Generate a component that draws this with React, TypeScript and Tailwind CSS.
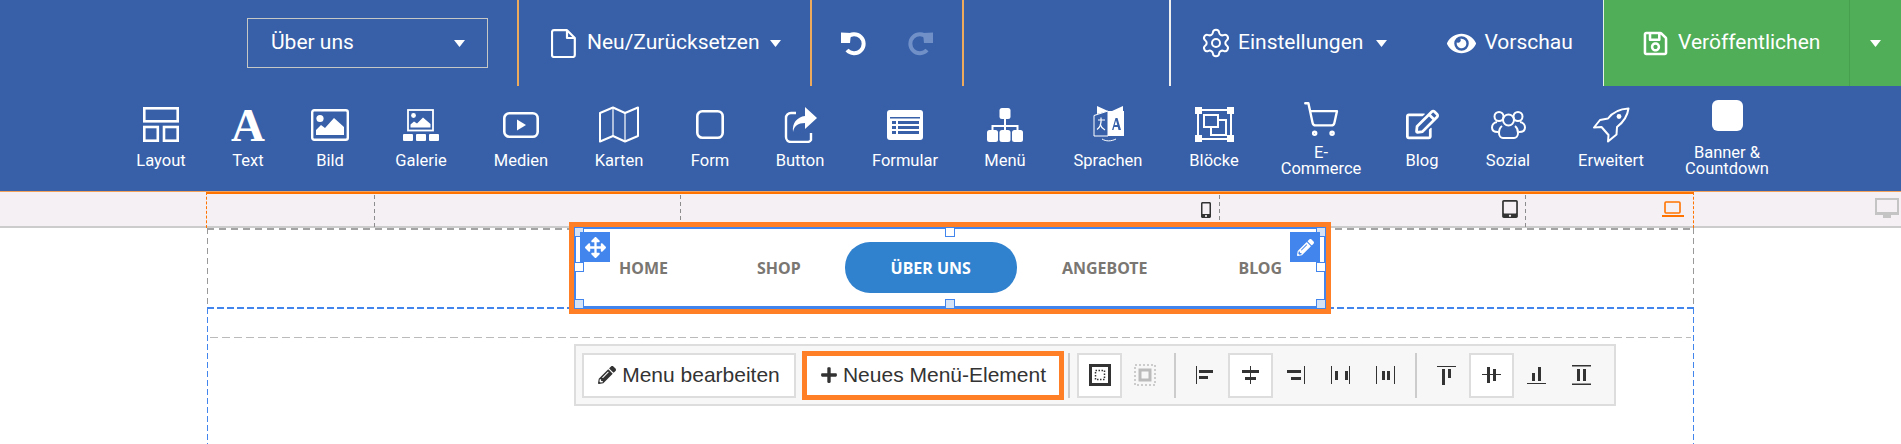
import { FaArrowsAlt, FaEye, FaPencilAlt, FaPlus, FaRegEdit, FaRegSave, FaMobileAlt, FaTabletAlt } from "react-icons/fa"
import { Settings, ShoppingCart } from "lucide-react"

const roboto = "font-['Roboto',sans-serif]"

const Caret = () => (
  <svg width="11" height="7" viewBox="0 0 11 7" className="shrink-0"><path d="M0 0h11L5.500 7z" fill="#fff" /></svg>
)

const FileIcon = () => (
  <svg width="25" height="29" viewBox="0 0 25 29" fill="none" stroke="#fff" strokeWidth="2.200" strokeLinejoin="round" className="shrink-0">
    <path d="M3 1.200h13l7.800 7.800v17a2 2 0 0 1-2 2H3a2 2 0 0 1-2-2V3a2 2 0 0 1 2-1.800z" />
    <path d="M16 1.200V9h7.800" />
  </svg>
)

const UndoIcon = ({ flip }: { flip?: boolean }) => (
  <svg width="26" height="25" viewBox="0 0 26 25" fill="none" className={flip ? "-scale-x-100 text-[#7190c8]" : "text-white"}>
    <path d="M6 6.500a9.500 9.500 0 1 1 0 12.500" stroke="currentColor" strokeWidth="4" />
    <path d="M0 1.500l10 .5-1 10H0z" fill="currentColor" />
  </svg>
)

const LayoutIcon = () => (
  <svg width="36" height="35" viewBox="0 0 36 35" fill="none" stroke="#fff" strokeWidth="2.600">
    <rect x="1.300" y="1.300" width="33.400" height="13" />
    <rect x="1.300" y="20" width="13.500" height="13.700" />
    <rect x="21" y="20" width="13.700" height="13.700" />
  </svg>
)

const BildIcon = () => (
  <svg width="38" height="32" viewBox="0 0 38 32">
    <rect x="1.200" y="1.200" width="35.600" height="29.600" rx="2" fill="none" stroke="#fff" strokeWidth="2.400" />
    <circle cx="9" cy="9.500" r="3.600" fill="#fff" />
    <path d="M5 26v-5l5-5 4 3 9-10 10 9v8z" fill="#fff" />
  </svg>
)

const GalerieIcon = () => (
  <svg width="36" height="32" viewBox="0 0 36 32">
    <rect x="5" y="1" width="25" height="20.500" fill="none" stroke="#fff" strokeWidth="1.800" />
    <circle cx="10.500" cy="6.500" r="2.400" fill="#fff" />
    <path d="M7.500 18.500v-3l3.500-3 3 2 6-6 7.500 6.500v3.500z" fill="#fff" />
    <rect x="0" y="25" width="10" height="7" rx="1" fill="#fff" />
    <rect x="13" y="25" width="10" height="7" rx="1" fill="#fff" />
    <rect x="26" y="25" width="10" height="7" rx="1" fill="#fff" />
  </svg>
)

const MedienIcon = () => (
  <svg width="36" height="26" viewBox="0 0 36 26">
    <rect x="1.300" y="1.300" width="33.400" height="23.400" rx="5" fill="none" stroke="#fff" strokeWidth="2.600" />
    <path d="M14 7.500l9 5.500-9 5.500z" fill="#fff" />
  </svg>
)

const KartenIcon = () => (
  <svg width="40" height="37" viewBox="0 0 40 37" fill="none" stroke="#fff" strokeWidth="2" strokeLinejoin="round">
    <path d="M1 7L14 1.500 26 7 39 1.500V30l-13 5.500L14 30 1 35.500z" />
    <path d="M14 2v28M26 7v28" strokeWidth="1.200" />
  </svg>
)

const FormIcon = () => (
  <svg width="28" height="29" viewBox="0 0 28 29"><rect x="1.300" y="1.300" width="25.400" height="26.400" rx="5" fill="none" stroke="#fff" strokeWidth="2.600" /></svg>
)

const ButtonIcon = () => (
  <svg width="33" height="36" viewBox="0 0 33 36" fill="none">
    <path d="M12 6H7a5 5 0 0 0-5 5v19a5 5 0 0 0 5 5h17a4 4 0 0 0 3-2v-7" stroke="#fff" strokeWidth="2.400" />
    <path d="M21 0l12 11-12 11v-6c-7 0-11 3-12 9-1-9 4-15 12-16z" fill="#fff" />
  </svg>
)

const FormularIcon = () => (
  <svg width="36" height="30" viewBox="0 0 36 30">
    <rect width="36" height="30" rx="3" fill="#fff" />
    <g fill="#3760a9">
      <rect x="3" y="7" width="30" height="1.500" />
      <rect x="5" y="11" width="4" height="3" /><rect x="11" y="11" width="21" height="3" />
      <rect x="5" y="16" width="4" height="3" /><rect x="11" y="16" width="21" height="3" />
      <rect x="5" y="21" width="4" height="3" /><rect x="11" y="21" width="21" height="3" />
    </g>
  </svg>
)

const MenuIcon = () => (
  <svg width="36" height="34" viewBox="0 0 36 34">
    <rect x="12.500" y="0" width="11" height="11" rx="2.500" fill="#fff" />
    <path d="M18 11v7M5.500 22v-4h25v4M18 18v4" stroke="#fff" strokeWidth="2" fill="none" />
    <rect x="0" y="22" width="11" height="12" rx="2.500" fill="#fff" />
    <rect x="12.500" y="22" width="11" height="12" rx="2.500" fill="#fff" />
    <rect x="25" y="22" width="11" height="12" rx="2.500" fill="#fff" />
  </svg>
)

const SprachenIcon = () => (
  <svg width="31" height="37" viewBox="0 0 31 37">
    <path d="M1 9.500L15 5v25L1 30z" fill="none" stroke="#fff" strokeWidth="1" />
    <path d="M15 5h16v25H15z" fill="#fff" />
    <path d="M4 0l11 5L4 8zM30 0L19 5l11 2z" fill="#fff" />
    <path d="M5 14h7M8 11.500c.5 5-1 10-4 12M7 18c1 3 3 5 5 6" stroke="#fff" strokeWidth="1.200" fill="none" />
    <path d="M19 24l3.500-12h2L28 24h-2.500l-.7-3h-3.600l-.7 3zM21.700 19h2.600l-1.300-4.500z" fill="#3760a9" fillRule="evenodd" />
    <path d="M9 33c4 2.500 9 2.500 14 0" stroke="#fff" strokeWidth="1" fill="none" />
  </svg>
)

const BloeckeIcon = () => (
  <svg width="39" height="35" viewBox="0 0 39 35" fill="none">
    <rect x="3" y="3" width="33" height="29" stroke="#fff" strokeWidth="2" />
    <g fill="#fff">
      <rect width="7" height="7" /><rect x="32" width="7" height="7" />
      <rect y="28" width="7" height="7" /><rect x="32" y="28" width="7" height="7" />
    </g>
    <rect x="9" y="8" width="14" height="12" stroke="#fff" strokeWidth="2" />
    <path d="M23 13h8v15H16v-8" stroke="#fff" strokeWidth="2" />
  </svg>
)

const SozialIcon = () => (
  <svg width="35" height="28" viewBox="0 0 35 28" fill="none" stroke="#fff" strokeWidth="2">
    <circle cx="8" cy="5.500" r="4.500" />
    <circle cx="27" cy="5.500" r="4.500" />
    <circle cx="17.500" cy="9" r="5.500" />
    <path d="M6 11c-3 .5-5 3-5 5.500S3 21 7 21M29 11c3 .5 5 3 5 5.500S32 21 28 21" />
    <path d="M11 15c-2 1.500-3 4-3 7 0 3 2 5 4 5h11c2 0 4-2 4-5 0-3-1-5.500-3-7" />
  </svg>
)

const RocketIcon = () => (
  <svg width="37" height="36" viewBox="0 0 37 36" fill="none" stroke="#fff" strokeWidth="2" strokeLinejoin="round">
    <path d="M35.500 1.500c-10 .5-16 4-20.500 10l-8 1.500L1 20.500l7.500-.5 7 8-.5 6.500 8.500-7 .5-7.500c6.500-5 10.500-11 11.500-18.500z" />
    <circle cx="26" cy="9.500" r="2.400" fill="#fff" stroke="none" />
  </svg>
)

const BannerIcon = () => <div className="w-[31px] h-[31px] rounded-[6px] bg-white" />

const Glyph = () => (
  <span className="font-['Liberation_Serif',serif] font-bold text-[47px] leading-[36px] text-white">A</span>
)

const tools = [
  { label: "Layout", w: "w-[86px]", icon: <LayoutIcon /> },
  { label: "Text", w: "w-[88px]", icon: <Glyph /> },
  { label: "Bild", w: "w-[76px]", icon: <BildIcon /> },
  { label: "Galerie", w: "w-[106px]", icon: <GalerieIcon /> },
  { label: "Medien", w: "w-[94px]", icon: <MedienIcon /> },
  { label: "Karten", w: "w-[102px]", icon: <KartenIcon /> },
  { label: "Form", w: "w-[80px]", icon: <FormIcon /> },
  { label: "Button", w: "w-[100px]", icon: <ButtonIcon /> },
  { label: "Formular", w: "w-[110px]", icon: <FormularIcon /> },
  { label: "Menü", w: "w-[90px]", icon: <MenuIcon /> },
  { label: "Sprachen", w: "w-[116px]", icon: <SprachenIcon /> },
  { label: "Blöcke", w: "w-[96px]", icon: <BloeckeIcon /> },
  { label: "E-Commerce", w: "w-[118px]", icon: <ShoppingCart size={38} strokeWidth={1.500} color="#fff" />, lines: ["E-", "Commerce"], up: true },
  { label: "Blog", w: "w-[84px]", icon: <FaRegEdit size={33} color="#fff" /> },
  { label: "Sozial", w: "w-[88px]", icon: <SozialIcon /> },
  { label: "Erweitert", w: "w-[118px]", icon: <RocketIcon /> },
  { label: "Banner", w: "w-[114px]", icon: <BannerIcon />, lines: ["Banner &", "Countdown"], up: true },
]

const navItems = [
  { label: "HOME", cls: "pl-[45px] pr-[45px]" },
  { label: "SHOP", cls: "pl-[44px] pr-[44px]" },
  { label: "ÜBER UNS", cls: "h-[51px] px-[46px] flex items-center bg-[#3182ce] text-white rounded-[25px]" },
  { label: "ANGEBOTE", cls: "pl-[45px] pr-[45px]" },
  { label: "BLOG", cls: "pl-[46px] pr-[40px]" },
]

const FrameIcon = ({ dim }: { dim?: boolean }) => dim ? (
  <svg width="22" height="22" viewBox="0 0 22 22" fill="none">
    <rect x="1" y="1" width="20" height="20" stroke="#ccc" strokeWidth="2" strokeDasharray="2 2" />
    <rect x="6" y="6" width="10" height="10" stroke="#bbb" strokeWidth="3" />
  </svg>
) : (
  <svg width="22" height="22" viewBox="0 0 22 22" fill="none">
    <rect x="1.500" y="1.500" width="19" height="19" stroke="#333" strokeWidth="3" />
    <rect x="6.500" y="6.500" width="9" height="9" stroke="#333" strokeWidth="1.500" strokeDasharray="1.500 1.500" />
  </svg>
)

const alignPaths = [
  "M1 2h1v18H1zM4 6h14v3H4zM4 12h9v3H4z",
  "M10 2h1v18h-1zM2 6h17v3H2zM5 13h11v3H5z",
  "M19 2h1v18h-1zM2 6h14v3H2zM6 13h10v3H6z",
  "M1 2h1v18H1zM19 2h1v18h-1zM5 7h3v9H5zM15 7h3v9h-3z",
  "M1 2h1v18H1zM19 2h1v18h-1zM7 7h3v9H7zM12 7h3v9h-3z",
  "M1 2h19v1H1zM6 5h3v16H6zM12 5h3v9h-3z",
  "M1 10h19v1H1zM6 3h3v16H6zM12 5h3v12h-3z",
  "M1 19h19v1H1zM6 9h3v8H6zM12 3h3v14h-3z",
  "M1 1h19v1.500H1zM1 19.500h19V21H1zM6 5h3v12H6zM12 5h3v12h-3z",
]

const AlignIcon = ({ d }: { d: string }) => (
  <svg width="21" height="22" viewBox="0 0 21 22" fill="#333"><path d={d} /></svg>
)

const IconBtn = ({ active, children }: { active?: boolean; children: React.ReactNode }) => (
  <div className={active ? "w-[45px] h-[45px] flex items-center justify-center shrink-0 bg-white border-2 border-[#ddd]" : "w-[45px] h-[45px] flex items-center justify-center shrink-0"}>
    {children}
  </div>
)

const Divider = () => <div className="w-[2px] h-[45px] bg-[#ccc] shrink-0" />

const Handle = ({ pos, fill }: { pos: string; fill?: boolean }) => (
  <div className={`absolute w-[10px] h-[10px] border border-[#4285ec] ${fill ? "bg-[#d5e3f9]" : "bg-white"} ${pos}`} />
)

const RulerMark = ({ left }: { left: string }) => (
  <div className={`absolute ${left} top-[3px] h-[33px] w-px bg-[repeating-linear-gradient(to_bottom,#8c8c8c_0_4px,transparent_4px_7px)]`} />
)

export default function App() {
  return (
    <div className={`w-[1901px] h-[444px] overflow-hidden bg-white flex flex-col ${roboto}`}>
      <header className="bg-[#3760a9] text-white shrink-0">
        <div className="flex h-[86px] text-[21px]">
          <div className="w-[519px] flex items-center pl-[247px] border-r-2 border-[#eda95c] shrink-0">
            <div className="w-[241px] h-[50px] border border-[#c5c8c5] flex items-center justify-between pl-[23px] pr-[22px]">
              <span>Über uns</span>
              <Caret />
            </div>
          </div>
          <div className="w-[293px] flex items-center pl-[32px] gap-[11px] border-r-2 border-[#eda95c] shrink-0">
            <FileIcon />
            <span>Neu/Zurücksetzen</span>
            <Caret />
          </div>
          <div className="w-[152px] flex items-center pl-[29px] gap-[40px] border-r-2 border-[#eda95c] shrink-0">
            <UndoIcon />
            <UndoIcon flip />
          </div>
          <div className="w-[207px] border-r-2 border-[#f0f0f0] shrink-0" />
          <div className="w-[432px] flex items-center pl-[29px] shrink-0">
            <Settings size={32} strokeWidth={1.500} />
            <span className="ml-[6px]">Einstellungen</span>
            <span className="ml-[13px]"><Caret /></span>
            <FaEye size={29} className="ml-[60px]" />
            <span className="ml-[8px]">Vorschau</span>
          </div>
          <div className="flex-1 bg-[#4fae57] flex border-l border-[#e4f3e5]">
            <div className="w-[246px] flex items-center pl-[38px] gap-[9px] border-r border-[#46a04e] shrink-0">
              <FaRegSave size={27} />
              <span>Veröffentlichen</span>
            </div>
            <div className="flex-1 flex items-center justify-center">
              <Caret />
            </div>
          </div>
        </div>
        <div className="flex h-[105px] pl-[118px]">
          {tools.map((t) => (
            <div key={t.label} className={`${t.w} shrink-0 flex flex-col items-center`}>
              <div className={t.up ? "h-[52px] flex items-start justify-center pt-[14px]" : "h-[60px] flex items-center justify-center pt-[17px]"}>{t.icon}</div>
              <div className={t.up ? "mt-[7px] text-[16.500px] leading-[16px] text-center" : "mt-[5px] text-[16.500px] leading-[20px] text-center"}>
                {t.lines ? t.lines.map((l) => <div key={l}>{l}</div>) : t.label}
              </div>
            </div>
          ))}
        </div>
      </header>

      <div className="relative h-[37px] bg-[#f5f0f4] border-b-2 border-b-[#ccc] border-t border-t-[#f3a25c] shrink-0">
        <div className="absolute left-[206px] w-[1488px] top-0 h-[2px] bg-[#ff7300]" />
        <div className="absolute left-[206px] top-0 h-[36px] border-l border-dashed border-[#ff7300]" />
        <div className="absolute left-[1693px] top-0 h-[36px] border-l border-dashed border-[#ff7300]" />
        <RulerMark left="left-[374px]" />
        <RulerMark left="left-[680px]" />
        <RulerMark left="left-[1219px]" />
        <RulerMark left="left-[1525px]" />
        <FaMobileAlt size={16} className="absolute left-[1198px] top-[10px] text-[#333]" />
        <FaTabletAlt size={18} className="absolute left-[1501px] top-[8px] text-[#333]" />
        <svg width="22" height="16" viewBox="0 0 22 16" className="absolute left-[1662px] top-[9px]" fill="none">
          <rect x="3" y="1" width="15" height="11" rx="1" stroke="#ff7300" strokeWidth="1.600" />
          <rect x="0" y="14" width="22" height="2" fill="#ff7300" />
        </svg>
        <svg width="24" height="22" viewBox="0 0 24 22" className="absolute left-[1875px] top-[6px]" fill="none">
          <rect x="1" y="1" width="22" height="15" stroke="#c4c4c4" strokeWidth="2" />
          <rect x="0" y="14" width="24" height="3" fill="#c4c4c4" />
          <rect x="8" y="17" width="8" height="3" fill="#c4c4c4" />
        </svg>
      </div>

      <div className="relative flex-1">
        <div className="absolute left-[207px] w-[1487px] top-0 h-[2px] bg-[repeating-linear-gradient(to_right,#a3a3a3_0_7px,transparent_7px_12px)]" />
        <div className="absolute left-[207px] top-0 h-[79px] w-px bg-[repeating-linear-gradient(to_bottom,#999_0_6px,transparent_6px_10px)]" />
        <div className="absolute left-[1693px] top-0 h-[79px] w-px bg-[repeating-linear-gradient(to_bottom,#999_0_6px,transparent_6px_10px)]" />
        <div className="absolute left-[207px] w-[1487px] top-[79px] h-[2px] bg-[repeating-linear-gradient(to_right,#4285ec_0_7px,transparent_7px_10px)]" />
        <div className="absolute left-[207px] top-[80px] bottom-0 w-px bg-[repeating-linear-gradient(to_bottom,#4285ec_0_6px,transparent_6px_9px)]" />
        <div className="absolute left-[1693px] top-[80px] bottom-0 w-px bg-[repeating-linear-gradient(to_bottom,#4285ec_0_6px,transparent_6px_9px)]" />
        <div className="absolute left-[210px] w-[1481px] top-[109px] h-px bg-[repeating-linear-gradient(to_right,#bbb_0_8px,transparent_8px_12px)]" />

        <div className="absolute left-[569px] top-[-6px] w-[762px] h-[92px] border-[5px] border-[#ff7f27] z-10">
          <div className="relative w-full h-full bg-white border-2 border-b-[3px] border-[#4285ec] flex items-center">
            <div className="flex items-center font-['Noto_Sans',sans-serif] font-bold text-[16px] text-[#7a7672] -ml-[2px]">
              {navItems.map((n) => (
                <div key={n.label} className={`${n.cls} whitespace-nowrap`}>{n.label}</div>
              ))}
            </div>
            <Handle pos="left-[-2px] top-[-2px]" fill />
            <Handle pos="right-[-2px] top-[-2px]" fill />
            <Handle pos="left-[-2px] bottom-[-3px]" fill />
            <Handle pos="right-[-2px] bottom-[-3px]" fill />
            <Handle pos="left-[369px] top-[-2px]" />
            <Handle pos="left-[369px] bottom-[-3px]" fill />
            <Handle pos="left-[-2px] top-[33px]" />
            <Handle pos="right-[-2px] top-[33px]" />
            <div className="absolute left-[4px] top-[3px] w-[30px] h-[30px] bg-[#4285ec] flex items-center justify-center text-white">
              <FaArrowsAlt size={21} />
            </div>
            <div className="absolute right-[4px] top-[3px] w-[30px] h-[30px] bg-[#4285ec] flex items-center justify-center text-white">
              <FaPencilAlt size={17} />
            </div>
          </div>
        </div>

        <div className="absolute left-[574px] top-[116px] w-[1042px] h-[62px] bg-[#f7f7f7] border-2 border-[#ddd] flex items-center pl-[6px] font-['Liberation_Sans',sans-serif] text-[21px] text-[#333]">
          <div className="w-[214px] h-[45px] shrink-0 bg-white border-2 border-[#ddd] flex items-center justify-center gap-[6px]">
            <FaPencilAlt size={18} />
            <span>Menu bearbeiten</span>
          </div>
          <div className="w-[262px] h-[49px] ml-[6px] shrink-0 bg-white border-[5px] border-[#ff7f27] flex items-center justify-center gap-[5px]">
            <FaPlus size={18} />
            <span>Neues Menü-Element</span>
          </div>
          <div className="ml-[4px]"><Divider /></div>
          <div className="ml-[7px] flex">
            <IconBtn active><FrameIcon /></IconBtn>
            <IconBtn><FrameIcon dim /></IconBtn>
          </div>
          <div className="ml-[7px]"><Divider /></div>
          <div className="ml-[7px] flex">
            {alignPaths.slice(0, 5).map((d, i) => (
              <IconBtn key={d} active={i === 1}><AlignIcon d={d} /></IconBtn>
            ))}
          </div>
          <div className="ml-[7px]"><Divider /></div>
          <div className="ml-[7px] flex">
            {alignPaths.slice(5).map((d, i) => (
              <IconBtn key={d} active={i === 1}><AlignIcon d={d} /></IconBtn>
            ))}
          </div>
        </div>
      </div>
    </div>
  )
}
